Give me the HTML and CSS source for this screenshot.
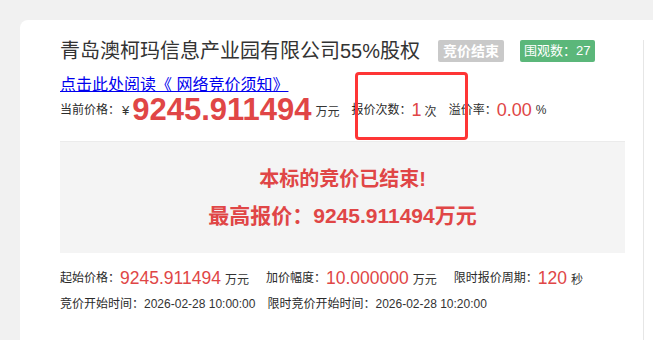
FILE: index.html
```html
<!DOCTYPE html>
<html lang="zh-CN">
<head>
    <meta charset="UTF-8">
    <meta name="viewport" content="width=device-width, initial-scale=1.0">
    <title>竞价详情</title>
    <link rel="stylesheet" href="styles.css">
</head>
<body>
    <div class="card">
        <div class="main">
            <div class="title-row">
                <h1 class="title">青岛澳柯玛信息产业园有限公司55%股权</h1>
                <span class="tag tag-end">竞价结束</span>
                <span class="tag tag-view">围观数：27</span>
            </div>

            <a class="notice" href="#">点击此处阅读《 网络竞价须知》</a>

            <div class="price-row">
                <span class="label">当前价格：</span>
                <span class="yen">¥</span>
                <span class="big-price">9245.911494</span>
                <span class="unit">万元</span>
                <span class="label gap">报价次数：</span>
                <span class="num-sm">1</span>
                <span class="unit unit-tight">次</span>
                <span class="label gap">溢价率：</span>
                <span class="num-sm">0.00</span>
                <span class="unit">%</span>
            </div>

            <div class="result">
                <p>本标的竞价已结束!</p>
                <p class="result-price">最高报价：9245.911494万元</p>
            </div>

            <div class="info-row">
                <span class="label">起始价格：</span>
                <span class="num">9245.911494</span>
                <span class="unit">万元</span>
                <span class="label wide-gap">加价幅度：</span>
                <span class="num">10.000000</span>
                <span class="unit">万元</span>
                <span class="label wide-gap">限时报价周期：</span>
                <span class="num">120</span>
                <span class="unit">秒</span>
            </div>

            <div class="info-row small">
                <span class="label">竞价开始时间：</span>
                <span class="date">2026-02-28 10:00:00</span>
                <span class="label gap">限时竞价开始时间：</span>
                <span class="date">2026-02-28 10:20:00</span>
            </div>
        </div>
        <div class="aside"></div>

        <div class="mark"></div>
    </div>
</body>
</html>
```

FILE: styles.css
```css
html, body {
    margin: 0;
    padding: 0;
}

body {
    background-color: #f1f1f1;
    font-family: "Liberation Sans", "Noto Sans CJK SC", sans-serif;
    color: #333;
    padding: 20px 0 0 20px;
    height: 340px;
    box-sizing: border-box;
    overflow: hidden;
}

.card {
    position: relative;
    display: flex;
    background-color: #fff;
    border-top-left-radius: 8px;
    min-height: 330px;
}

.main {
    width: 565px;
    padding: 20px 18px 0 40px;
}

.aside {
    flex: 1;
    margin-top: 20px;
    border-left: 1px solid #e6e6e6;
}

.title-row {
    display: flex;
    align-items: center;
    height: 22px;
}

.title {
    margin: 0 18px 0 0;
    font-size: 20px;
    line-height: 22px;
    font-weight: normal;
    color: #333;
}

.tag {
    height: 22px;
    line-height: 22px;
    font-size: 14px;
    color: #fff;
    padding: 0 5px;
    border-radius: 2px;
}

.tag-end {
    background-color: #c9c9c9;
    font-weight: bold;
    margin-right: 16px;
}

.tag-view {
    background-color: #5bb77a;
    font-size: 13px;
    padding: 0 4px;
}

.notice {
    display: inline-block;
    margin-top: 14px;
    font-size: 16px;
    line-height: 18px;
    color: #0000ee;
}

.price-row {
    display: flex;
    align-items: center;
    height: 32px;
}

.label {
    font-size: 12px;
    line-height: 16px;
    color: #2a2a2a;
}

.yen {
    font-size: 13px;
    margin: 0 3px 0 2px;
}

.big-price {
    font-size: 31px;
    line-height: 32px;
    font-weight: bold;
    color: #e04646;
}

.unit {
    font-size: 12px;
    margin-left: 4px;
}

.unit-tight {
    margin-left: 3px;
}

.gap {
    margin-left: 12px;
}

.wide-gap {
    margin-left: 17px;
}

.num-sm {
    font-size: 18px;
    line-height: 20px;
    color: #e04646;
}

.result {
    margin-top: 15px;
    height: 111px;
    border-top: 1px solid #ebebeb;
    background-color: #f4f4f4;
    display: flex;
    flex-direction: column;
    align-items: center;
    justify-content: center;
    gap: 7px;
}

.result p {
    margin: 0;
    font-size: 20px;
    line-height: 30px;
    font-weight: bold;
    color: #e04646;
}

.result .result-price {
    font-size: 21px;
}

.info-row {
    display: flex;
    align-items: center;
    margin-top: 13px;
    height: 24px;
}

.info-row .num {
    font-size: 17.5px;
    color: #e04646;
}

.info-row.small {
    margin-top: 5px;
    height: 18px;
}

.date {
    font-size: 12px;
}

.mark {
    position: absolute;
    left: 335px;
    top: 52px;
    width: 113px;
    height: 68px;
    box-sizing: border-box;
    border: 3px solid #fe3535;
    border-radius: 4px;
}
```
